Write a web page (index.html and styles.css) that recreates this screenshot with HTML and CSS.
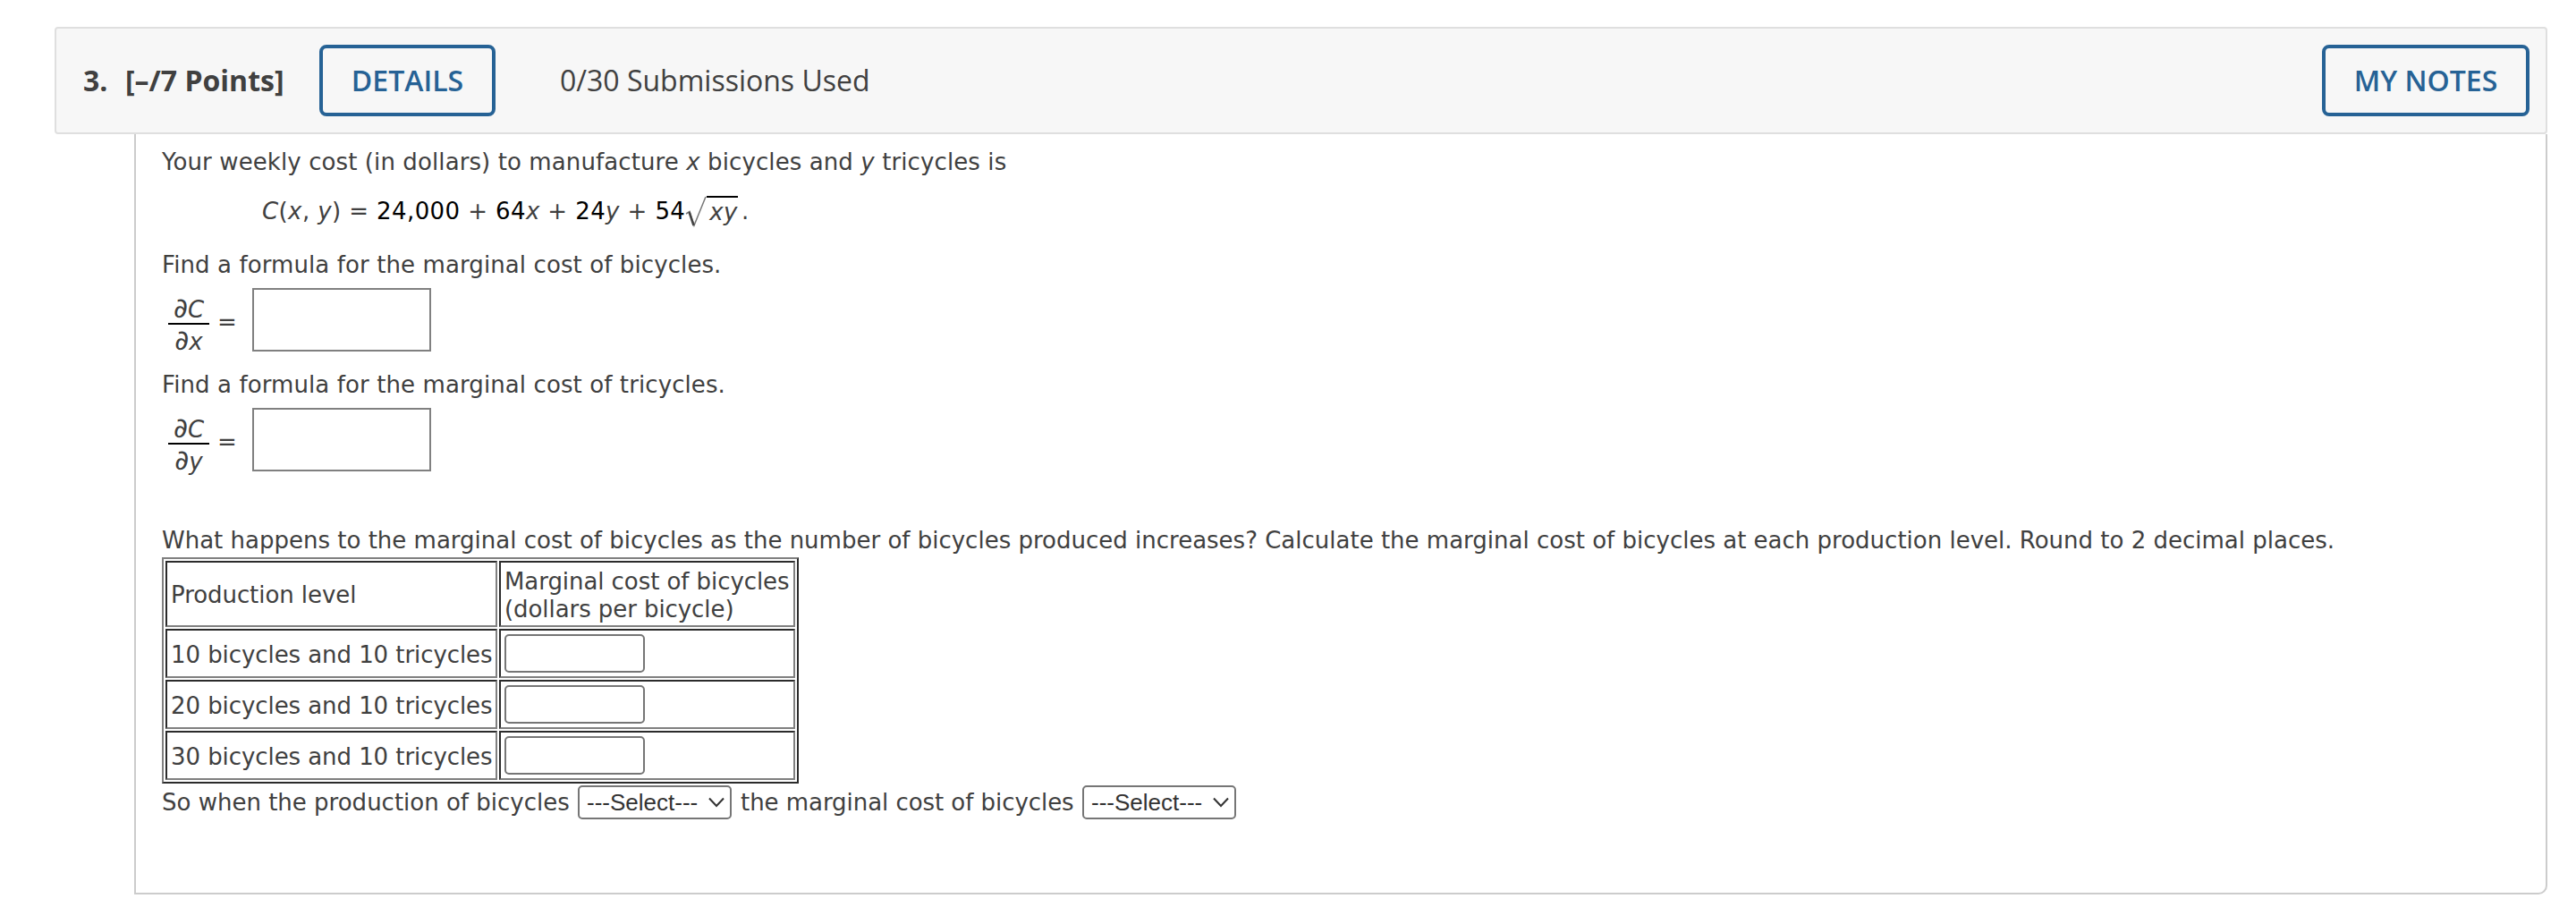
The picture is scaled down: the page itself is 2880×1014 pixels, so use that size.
FILE: index.html
```html
<!DOCTYPE html>
<html lang="en">
<head>
    <meta charset="UTF-8">
    <title>Marginal Cost</title>
    <link rel="stylesheet" href="styles.css">
</head>
<body>
    <div class="question">
        <div class="header">
            <div class="number">3.</div>
            <div class="points">[–/7 Points]</div>
            <button class="btn details">DETAILS</button>
            <div class="submissions">0/30 Submissions Used</div>
            <button class="btn notes">MY NOTES</button>
        </div>

        <div class="content">
            <p class="line intro">Your weekly cost (in dollars) to manufacture <i>x</i> bicycles and <i>y</i> tricycles is</p>
            <div class="line formula"><i>C</i>(<i>x</i>, <i>y</i>) = <b>24,000</b> + <b>64</b><i>x</i> + <b>24</b><i>y</i> + <b>54</b><svg class="radical" width="24" height="36" viewBox="0 0 24 36"><path d="M1 20L5 17.5L10 33L23 1" fill="none" stroke="#777" stroke-width="1.5"/><path d="M4.5 18L9.5 33" stroke="#444" stroke-width="2.5"/></svg><i class="radicand">xy</i>.</div>

            <p class="line prompt">Find a formula for the marginal cost of bicycles.</p>
            <div class="answer">
                <div class="fraction"><i><span class="partial">∂</span>C</i><i class="den"><span class="partial">∂</span>x</i></div>
                <span class="equals">=</span>
                <input type="text" class="math-input" aria-label="Marginal cost of bicycles">
            </div>

            <p class="line prompt">Find a formula for the marginal cost of tricycles.</p>
            <div class="answer">
                <div class="fraction"><i><span class="partial">∂</span>C</i><i class="den"><span class="partial">∂</span>y</i></div>
                <span class="equals">=</span>
                <input type="text" class="math-input" aria-label="Marginal cost of tricycles">
            </div>

            <p class="line long">What happens to the marginal cost of bicycles as the number of bicycles produced increases? Calculate the marginal cost of bicycles at each production level. Round to 2 decimal places.</p>
            <table class="levels">
                <tr class="head">
                    <td>Production level</td>
                    <td>Marginal cost of bicycles<br>(dollars per bicycle)</td>
                </tr>
                <tr>
                    <td>10 bicycles and 10 tricycles</td>
                    <td><input type="text" class="cell-input" aria-label="Cost at 10 bicycles"></td>
                </tr>
                <tr>
                    <td>20 bicycles and 10 tricycles</td>
                    <td><input type="text" class="cell-input" aria-label="Cost at 20 bicycles"></td>
                </tr>
                <tr>
                    <td>30 bicycles and 10 tricycles</td>
                    <td><input type="text" class="cell-input" aria-label="Cost at 30 bicycles"></td>
                </tr>
            </table>
            <div class="summary">
                <span class="so">So when the production of bicycles</span>
                <div class="select" role="button">---Select---<svg width="18" height="12" viewBox="0 0 18 12"><path d="M1 1.5L9 10L17 1.5" fill="none" stroke="#333" stroke-width="2"/></svg></div>
                <span class="the">the marginal cost of bicycles</span>
                <div class="select" role="button">---Select---<svg width="18" height="12" viewBox="0 0 18 12"><path d="M1 1.5L9 10L17 1.5" fill="none" stroke="#333" stroke-width="2"/></svg></div>
            </div>
        </div>
    </div>
</body>
</html>
```
FILE: styles.css
```css
* {
    box-sizing: border-box;
}

body {
    margin: 0;
    background: #fff;
    color: #404040;
    font-family: "DejaVu Sans", Verdana, sans-serif;
    font-size: 26px;
    line-height: 32px;
}

.question {
    padding: 30px 32px 14px 61px;
}

.header {
    display: flex;
    align-items: center;
    height: 120px;
    padding: 0 18px 0 30px;
    background: #f7f7f7;
    border: 2px solid #dfdfdf;
    border-radius: 4px;
    font-family: "Open Sans", sans-serif;
    font-size: 32px;
    white-space: nowrap;
}

.number,
.points {
    font-weight: 700;
}

.number {
    width: 47px;
}

.points {
    width: 217px;
}

.btn {
    height: 80px;
    padding: 0 0 2px;
    background: transparent;
    border: 4px solid #266295;
    border-radius: 8px;
    color: #266295;
    font-family: inherit;
    font-size: 32px;
    font-weight: 600;
}

.details {
    width: 197px;
}

.submissions {
    margin-left: 72px;
}

.notes {
    width: 232px;
    margin-left: auto;
}

.content {
    height: 850px;
    margin-left: 89px;
    padding: 15px 28px 0;
    border: 2px solid #ccc;
    border-top: 0;
    border-radius: 0 0 10px 0;
}

.line {
    margin: 0;
    padding-left: 1px;
    white-space: nowrap;
}

.intro,
.prompt {
    letter-spacing: 0.1px;
}

.formula {
    display: flex;
    height: 32px;
    margin: 23px 0 28px 112px;
    letter-spacing: 0.4px;
    white-space: pre;
}

.formula b {
    color: #000;
    font-weight: 400;
}

.radical {
    margin-top: -1px;
}

.radicand {
    height: 34px;
    margin: -1px 4px 0 0;
    padding: 0 0 0 3px;
    border-top: 2px solid #000;
}

.answer {
    display: flex;
    height: 71px;
    margin: 10px 0 21px;
    padding-left: 8px;
}

.fraction {
    width: 46px;
    padding-top: 7px;
    text-align: center;
}

.fraction i {
    display: block;
    height: 32px;
}

.fraction .den {
    height: 36px;
    padding-top: 2px;
    border-top: 2px solid #000;
}

.partial {
    font-size: 31px;
    line-height: 1;
    font-style: normal;
}

.equals {
    width: 48px;
    padding: 22px 0 0 9px;
}

.math-input {
    width: 200px;
    height: 71px;
    padding: 0;
    background: #fff;
    border: 2px solid #808080;
}

.long {
    margin-top: 61px;
}

.levels {
    width: 712px;
    height: 253px;
    margin: 3px 0 0 1px;
    table-layout: fixed;
    border: 2px solid;
    border-color: #808080 #2b2b2b #2b2b2b #808080;
    border-spacing: 2px;
    line-height: 31px;
    letter-spacing: -0.07px;
    white-space: nowrap;
}

.levels td {
    height: 55px;
    padding: 3px 4px 0;
    border: 2px solid;
    border-color: #2b2b2b #808080 #808080 #2b2b2b;
}

.levels td:first-child {
    width: 371px;
}

.levels .head td {
    height: 74px;
}

.cell-input {
    display: block;
    width: 157px;
    height: 43px;
    margin-top: -3px;
    padding: 0;
    border: 2px solid #767676;
    border-radius: 5px;
}

.summary {
    display: flex;
    height: 38px;
    margin-top: 2px;
    line-height: 38px;
    white-space: nowrap;
}

.so {
    width: 466px;
    padding-left: 1px;
}

.the {
    width: 382px;
    margin-left: 10px;
    letter-spacing: -0.05px;
}

.select {
    display: flex;
    justify-content: space-between;
    align-items: center;
    width: 172px;
    height: 38px;
    padding: 0 6px 0 8px;
    border: 2px solid #767676;
    border-radius: 5px;
    color: #333;
    font-family: "Liberation Sans", Arial, sans-serif;
    font-size: 26px;
}
```
